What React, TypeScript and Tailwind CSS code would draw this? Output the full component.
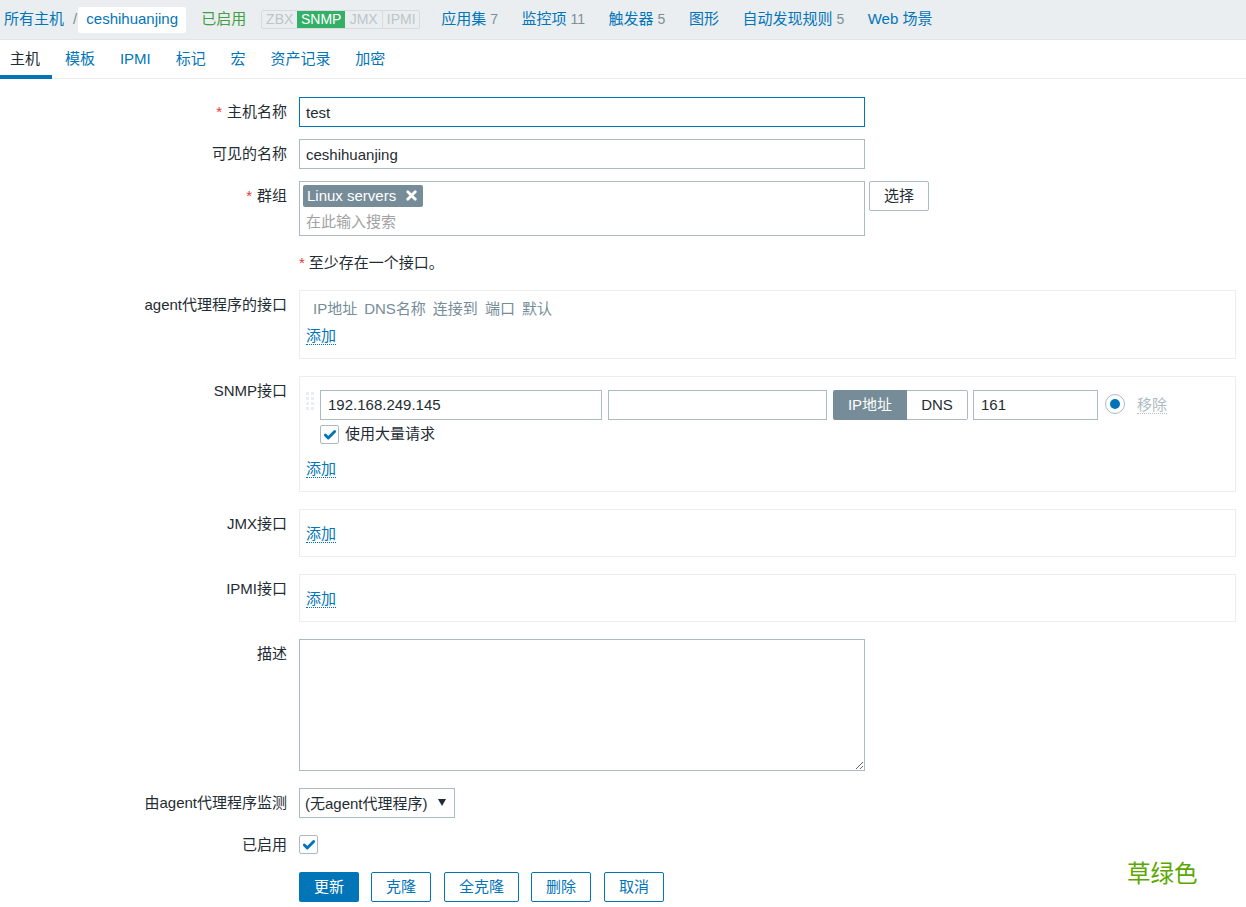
import { Check, X } from 'lucide-react';
import type { ReactNode } from 'react';

const font = { fontFamily: '"Liberation Sans", "Noto Sans CJK SC", sans-serif' };

function Row({ label, required, children, cls }: { label?: string; required?: boolean; children: ReactNode; cls?: string }) {
  return (
    <div className={`flex ${cls ?? 'mb-3'}`}>
      <div className="w-[287px] shrink-0 text-right pt-[5px] leading-[20px] text-[#1f2c33]">
        {required && <span className="text-[#e33734] mr-[5px]">*</span>}
        {label}
      </div>
      <div className="ml-3 flex-1 min-w-0">{children}</div>
    </div>
  );
}

function AddLink({ cls }: { cls?: string }) {
  return (
    <span className={`text-[#0275b8] border-b border-dotted border-[#0275b8] leading-[17px] inline-block ${cls ?? ''}`}>添加</span>
  );
}

function Box({ h, children }: { h: string; children: ReactNode }) {
  return <div className={`w-[937px] ${h} border border-[#ebeef0] px-[6px] bg-white`}>{children}</div>;
}

function CheckBox() {
  return (
    <div className="w-[19px] h-[19px] border border-[#acbbc2] rounded-[2px] flex items-center justify-center bg-white">
      <Check size={14} strokeWidth={5} className="text-[#0275b8]" />
    </div>
  );
}

const navItems: [string, string?][] = [
  ['应用集', '7'],
  ['监控项', '11'],
  ['触发器', '5'],
  ['图形'],
  ['自动发现规则', '5'],
  ['Web 场景'],
];

const tabs = ['模板', 'IPMI', '标记', '宏', '资产记录', '加密'];

export default function App() {
  return (
    <div className="relative w-[1246px] h-[907px] overflow-hidden bg-white text-[15px] text-[#1f2c33]" style={font}>
      {/* top host bar */}
      <div className="h-10 bg-[#ebeef0] border-b border-[#dfe4e7] flex items-center pl-1">
        <span className="text-[#0275b8]">所有主机</span>
        <span className="ml-[9px] text-[#7b8e99]">/</span>
        <span className="ml-[1px] h-[26px] w-[108px] bg-white rounded-[2px] text-[#0275b8] flex items-center justify-center">ceshihuanjing</span>
        <span className="ml-[15px] text-[#429e47]">已启用</span>
        <div className="ml-[15px] h-[19px] w-[159px] flex border border-[#d5dbde] rounded-[2px] text-[14px] leading-[17px] text-[#bcc5ca] bg-[#ebeef0]">
          <span className="w-[35px] text-center">ZBX</span>
          <span className="w-[48px] text-center bg-[#34af67] text-white">SNMP</span>
          <span className="w-[38px] text-center border-r border-[#d5dbde]">JMX</span>
          <span className="flex-1 text-center">IPMI</span>
        </div>
        <div className="ml-[21px] flex gap-[23.5px]">
          {navItems.map(([name, count]) => (
            <span key={name} className="text-[#0275b8]">
              {name}
              {count && <span className="ml-[4px] text-[14px] text-[#7b8e99]">{count}</span>}
            </span>
          ))}
        </div>
      </div>

      {/* tabs */}
      <div className="h-[39px] border-b border-[#ebeef0] flex items-start">
        <div className="h-[39px] w-[52px] border-b-[4px] border-[#0275b8] text-center leading-[37px] text-[#1f2c33] pr-[2px]">主机</div>
        <div className="ml-[13px] flex gap-[24.9px] leading-[37px] text-[#0275b8]">
          {tabs.map((t) => (
            <span key={t}>{t}</span>
          ))}
        </div>
      </div>

      {/* form */}
      <div className="pt-[18px]">
        <Row label="主机名称" required>
          <div className="w-[566px] h-[30px] border border-[#0275b8] px-[6px] leading-[29px]">test</div>
        </Row>
        <Row label="可见的名称">
          <div className="w-[566px] h-[30px] border border-[#acbbc2] px-[6px] leading-[29px]">ceshihuanjing</div>
        </Row>
        <Row label="群组" required cls="mb-[17px]">
          <div className="flex items-start">
            <div className="w-[566px] h-[55px] border border-[#acbbc2] pl-[3px] pt-[3px]">
              <div className="w-[120px] h-[22px] bg-[#768d99] rounded-[2px] text-white flex items-center pl-[4px] pb-[1px] leading-none">
                Linux servers
                <X size={15} strokeWidth={4.5} className="ml-[8px]" />
              </div>
              <div className="pl-[3px] mt-[5px] leading-[20px] text-[#a2a2a2]">在此输入搜索</div>
            </div>
            <div className="ml-[4px] w-[60px] h-[30px] border border-[#acbbc2] rounded-[2px] flex items-center justify-center">选择</div>
          </div>
        </Row>
        <div className="flex h-[20px] mb-[17px] pl-[299px] leading-[20px]">
          <span className="text-[#e33734] mr-1">*</span>至少存在一个接口。
        </div>
        <Row label="agent代理程序的接口" cls="mb-[17px]">
          <Box h="h-[69px]">
            <div className="pl-[7px] pt-[8px] flex gap-[7px] text-[#768d99] leading-[20px]">
              <span>IP地址</span>
              <span>DNS名称</span>
              <span>连接到</span>
              <span>端口</span>
              <span>默认</span>
            </div>
            <AddLink cls="mt-[8px]" />
          </Box>
        </Row>
        <Row label="SNMP接口" cls="mb-[17px]">
          <Box h="h-[116px]">
            <div className="flex items-start pt-[13px]">
              <div className="w-[8px] h-[24px] mt-[2px] grid grid-cols-2 gap-x-[2px] gap-y-[2px] content-start">
                {Array.from({ length: 8 }).map((_, i) => (
                  <span key={i} className="w-[3px] h-[3px] bg-[#ebeef0]" />
                ))}
              </div>
              <div className="ml-[6px] w-[282px] h-[30px] border border-[#acbbc2] px-[7px] leading-[28px]">192.168.249.145</div>
              <div className="ml-[6px] w-[219px] h-[30px] border border-[#acbbc2]" />
              <div className="ml-[6px] w-[135px] h-[30px] flex rounded-[2px]">
                <span className="w-[74px] bg-[#768d99] text-white text-center leading-[30px] rounded-l-[2px]">IP地址</span>
                <span className="flex-1 text-center leading-[28px] border border-l-0 border-[#acbbc2] rounded-r-[2px]">DNS</span>
              </div>
              <div className="ml-[5px] w-[125px] h-[30px] border border-[#acbbc2] px-[7px] leading-[28px]">161</div>
              <div className="ml-[7px] mt-[4px] w-[20px] h-[20px] rounded-full border border-[#acbbc2] flex items-center justify-center">
                <span className="w-[10px] h-[10px] rounded-full bg-[#0275b8]" />
              </div>
              <span className="ml-[12px] mt-[6px] text-[#acbbc2] border-b border-dotted border-[#acbbc2] leading-[17px]">移除</span>
            </div>
            <div className="flex items-center ml-[14px] mt-[5px] h-[19px]">
              <CheckBox />
              <span className="ml-[6px]">使用大量请求</span>
            </div>
            <AddLink cls="mt-[16px]" />
          </Box>
        </Row>
        <Row label="JMX接口" cls="mb-[17px]">
          <Box h="h-[48px]">
            <AddLink cls="mt-[15px]" />
          </Box>
        </Row>
        <Row label="IPMI接口" cls="mb-[17px]">
          <Box h="h-[48px]">
            <AddLink cls="mt-[15px]" />
          </Box>
        </Row>
        <Row label="描述" cls="mb-[17px]">
          <textarea readOnly className="block w-[566px] h-[132px] border border-[#acbbc2] outline-none" />
        </Row>
        <Row label="由agent代理程序监测" cls="mb-[17px]">
          <div className="w-[156px] h-[30px] border border-[#acbbc2] flex items-center pl-[5px] pt-[3px] relative">
            (无agent代理程序)
            <span className="absolute left-[138px] top-[10px] w-0 h-0 border-l-[4px] border-r-[4px] border-t-[7px] border-l-transparent border-r-transparent border-t-[#1f2c33]" />
          </div>
        </Row>
        <div className="flex h-[19px] mb-[18px]">
          <div className="w-[287px] text-right leading-[19px]">已启用</div>
          <div className="ml-3">
            <CheckBox />
          </div>
        </div>
        <div className="flex pl-[299px] h-[30px]">
          <div className="w-[60px] bg-[#0275b8] rounded-[2px] text-white flex items-center justify-center pt-[1px]">更新</div>
          <div className="ml-[12px] w-[60px] border border-[#0275b8] rounded-[2px] text-[#0275b8] flex items-center justify-center pt-[1px]">克隆</div>
          <div className="ml-[13px] w-[75px] border border-[#0275b8] rounded-[2px] text-[#0275b8] flex items-center justify-center pt-[1px]">全克隆</div>
          <div className="ml-[12px] w-[60px] border border-[#0275b8] rounded-[2px] text-[#0275b8] flex items-center justify-center pt-[1px]">删除</div>
          <div className="ml-[13px] w-[60px] border border-[#0275b8] rounded-[2px] text-[#0275b8] flex items-center justify-center pt-[1px]">取消</div>
        </div>
      </div>

      {/* annotation over the page */}
      <span className="absolute left-[1127px] top-[858px] text-[23.5px] leading-[32px] text-[#5aa700]">草绿色</span>
    </div>
  );
}
